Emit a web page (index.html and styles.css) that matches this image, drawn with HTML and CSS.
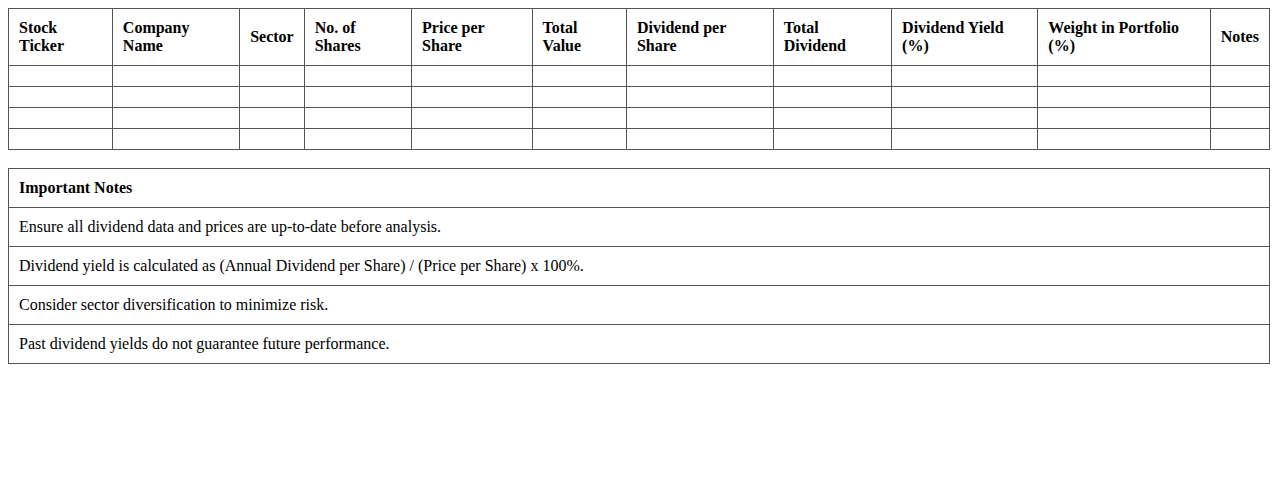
FILE: index.html
```html
<!DOCTYPE html>
<html>
<head>
<meta charset="utf-8">
<link rel="stylesheet" href="styles.css">
</head>
<body>
<table class="grid">
  <thead>
    <tr>
      <th>Stock Ticker</th>
      <th>Company Name</th>
      <th>Sector</th>
      <th>No. of Shares</th>
      <th>Price per Share</th>
      <th>Total Value</th>
      <th>Dividend per Share</th>
      <th>Total Dividend</th>
      <th>Dividend Yield (%)</th>
      <th>Weight in Portfolio (%)</th>
      <th>Notes</th>
    </tr>
  </thead>
  <tbody>
    <tr><td></td><td></td><td></td><td></td><td></td><td></td><td></td><td></td><td></td><td></td><td></td></tr>
    <tr><td></td><td></td><td></td><td></td><td></td><td></td><td></td><td></td><td></td><td></td><td></td></tr>
    <tr><td></td><td></td><td></td><td></td><td></td><td></td><td></td><td></td><td></td><td></td><td></td></tr>
    <tr><td></td><td></td><td></td><td></td><td></td><td></td><td></td><td></td><td></td><td></td><td></td></tr>
  </tbody>
</table>
<table class="grid notes">
  <thead>
    <tr><th>Important Notes</th></tr>
  </thead>
  <tbody>
    <tr><td>Ensure all dividend data and prices are up-to-date before analysis.</td></tr>
    <tr><td>Dividend yield is calculated as (Annual Dividend per Share) / (Price per Share) x 100%.</td></tr>
    <tr><td>Consider sector diversification to minimize risk.</td></tr>
    <tr><td>Past dividend yields do not guarantee future performance.</td></tr>
  </tbody>
</table>
</body>
</html>
```
FILE: styles.css
```css
body {
  margin: 8px;
  font-family: "Liberation Serif", "Times New Roman", serif;
  font-size: 16px;
  color: #000;
  background: #fff;
}
.grid {
  width: 100%;
  border-collapse: collapse;
  margin-bottom: 18px;
}
.grid th,
.grid td {
  border: 1px solid #555;
  padding: 10px;
  text-align: left;
  vertical-align: middle;
}
.grid th {
  font-weight: bold;
}
```
